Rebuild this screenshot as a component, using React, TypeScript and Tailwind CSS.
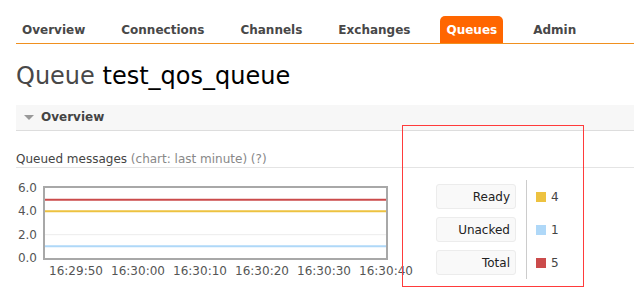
import React from 'react';

const tabs = ['Overview', 'Connections', 'Channels', 'Exchanges', 'Queues', 'Admin'];

const series = [
  { label: 'Ready', value: 4, color: '#edc240' },
  { label: 'Unacked', value: 1, color: '#afd8f8' },
  { label: 'Total', value: 5, color: '#cb4b4b' },
];

const xTicks = ['16:29:50', '16:30:00', '16:30:10', '16:30:20', '16:30:30', '16:30:40'];

// chart inner area is 341 x 70, max value 6
const toY = (v: number) => 70 - (v * 70) / 6;

const Chart: React.FC = () => (
  <div className="flex mt-[6px]">
    <div className="w-[21px] h-[84px] -mt-[5px] mr-[6px] flex flex-col justify-between text-right text-[12px] leading-[14px] text-[#555]">
      <span>6.0</span>
      <span>4.0</span>
      <span>2.0</span>
      <span>0.0</span>
    </div>
    <div className="flex flex-col">
      <div className="w-[345px] h-[74px] border-2 border-[#a8a8a8] bg-white">
        <svg width="341" height="70" viewBox="0 0 341 70" className="block">
          <line x1="0" x2="341" y1={toY(2)} y2={toY(2)} stroke="#ececec" strokeWidth="1" />
          {series.map((s) => (
            <line key={s.label} x1="0" x2="341" y1={toY(s.value)} y2={toY(s.value)} stroke={s.color} strokeWidth="2" />
          ))}
        </svg>
      </div>
      <div className="flex ml-[2px] mt-[4px] w-[341px] text-[12px] leading-[14px] text-[#555]">
        {xTicks.map((t) => (
          <span key={t} className="w-[62px] shrink-0 text-center whitespace-nowrap">
            {t}
          </span>
        ))}
      </div>
    </div>
  </div>
);

const Legend: React.FC = () => (
  <div className="flex ml-[48px]">
    <div className="flex flex-col gap-[8px] py-[4px] pr-[10px] border-r border-[#cccccc]">
      {series.map((s) => (
        <div
          key={s.label}
          className="w-[80px] h-[25px] flex items-center justify-end pr-[5px] bg-[#f9f9f9] border border-[#ececec] rounded-[3px] text-[12px] text-[#222]"
        >
          {s.label}
        </div>
      ))}
    </div>
    <div className="flex flex-col gap-[8px] py-[4px] pl-[9px]">
      {series.map((s) => (
        <div key={s.label} className="h-[25px] flex items-center text-[12px] text-[#444]">
          <span className="w-[10px] h-[10px] mr-[5px]" style={{ backgroundColor: s.color }} />
          {s.value}
        </div>
      ))}
    </div>
  </div>
);

export default function App() {
  return (
    <div
      className="relative w-[634px] h-[308px] overflow-hidden bg-white pt-[16px]"
      style={{ fontFamily: '"DejaVu Sans", Verdana, sans-serif' }}
    >
      <nav className="ml-[16px] flex gap-[24px] border-b border-[#f0901f]">
        {tabs.map((t) => (
          <a
            key={t}
            className={
              t === 'Queues'
                ? 'px-[6px] pt-[7px] pb-[6px] text-[12px] leading-[14px] font-bold text-white bg-[#ff6600] rounded-t-[5px]'
                : 'px-[6px] pt-[7px] pb-[6px] text-[12px] leading-[14px] font-bold text-[#484848]'
            }
          >
            {t}
          </a>
        ))}
      </nav>

      <div className="pl-[16px]">
        <h1 className="mt-[18px] mb-[14px] text-[24px] leading-[29px] font-normal">
          <span className="text-[#484848]">Queue </span>
          <span className="text-black">test_qos_queue</span>
        </h1>

        <div className="h-[26px] flex items-start pt-[5px] pl-[8px] bg-[#f7f7f7] border-b border-[#dddddd]">
          <span className="mt-[5px] w-0 h-0 border-l-[5px] border-r-[5px] border-t-[5px] border-l-transparent border-r-transparent border-t-[#999]" />
          <span className="ml-[7px] text-[12px] leading-[14px] font-bold text-[#444]">Overview</span>
        </div>

        <div className="mt-[21px] pb-[1px] border-b border-[#e4e4e4] text-[12px] leading-[14px]">
          <span className="text-[#444]">Queued messages </span>
          <span className="text-[#888]">(chart: last minute) (?)</span>
        </div>

        <div className="flex items-start mt-[12px]">
          <Chart />
          <Legend />
        </div>
      </div>

      <div className="absolute left-[402px] top-[125px] w-[182px] h-[162px] border border-[#ff3b3b]" />
    </div>
  );
}
